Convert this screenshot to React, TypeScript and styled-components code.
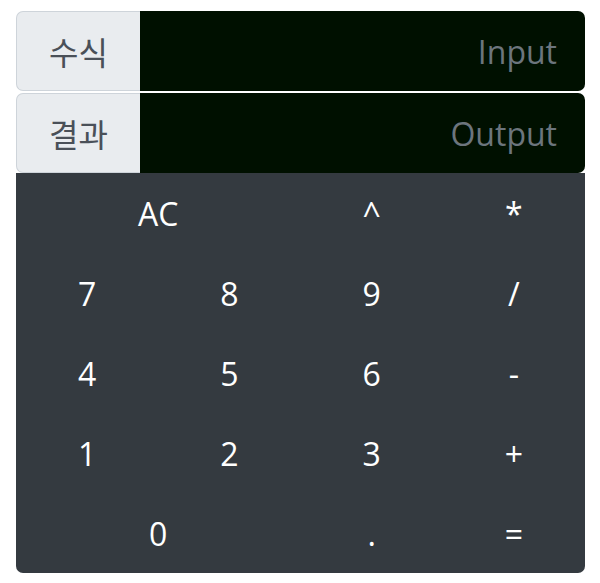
import React from "react";
import styled, { createGlobalStyle } from "styled-components";

const Global = createGlobalStyle`
  html, body { margin: 0; padding: 0; background: #fff; }
  body { font-family: "Open Sans", "Noto Sans CJK KR", sans-serif; }
`;

const Wrap = styled.div`
  padding: 11px 15px 0 16px;
  display: flex;
  flex-direction: column;
  gap: 2px;
  width: 569px;
`;

const Row = styled.div`
  display: flex;
  height: 80px;
`;

const Label = styled.div`
  width: 124px;
  box-sizing: border-box;
  display: flex;
  align-items: center;
  justify-content: center;
  background: #e9ecef;
  border: 1px solid #ced4da;
  border-right: none;
  border-radius: 7px 0 0 7px;
  color: #4a5058;
  font-size: 32px;
  font-family: "Noto Sans CJK KR", sans-serif;
`;

const Field = styled.div`
  flex: 1;
  display: flex;
  align-items: center;
  justify-content: flex-end;
  padding-right: 28px;
  background: #001000;
  border-radius: 0 7px 7px 0;
  color: #6c757d;
  font-size: 32px;
`;

const Pad = styled.div`
  display: grid;
  grid-template-columns: repeat(4, 1fr);
  grid-auto-rows: 80px;
  background: #343a40;
  border-radius: 0 0 7px 7px;
  margin-top: -2px;
`;

const Key = styled.div<{ $span?: number }>`
  grid-column: span ${(p) => p.$span ?? 1};
  display: flex;
  align-items: center;
  justify-content: center;
  color: #fff;
  font-size: 32px;
`;

const keys: [string, number?][] = [
  ["AC", 2], ["^"], ["*"],
  ["7"], ["8"], ["9"], ["/"],
  ["4"], ["5"], ["6"], ["-"],
  ["1"], ["2"], ["3"], ["+"],
  ["0", 2], ["."], ["="],
];

export default function App() {
  return (
    <>
      <Global />
      <Wrap>
        <Row>
          <Label>수식</Label>
          <Field>Input</Field>
        </Row>
        <Row>
          <Label>결과</Label>
          <Field>Output</Field>
        </Row>
        <Pad>
          {keys.map(([k, s]) => (
            <Key key={k} $span={s}>{k}</Key>
          ))}
        </Pad>
      </Wrap>
    </>
  );
}
